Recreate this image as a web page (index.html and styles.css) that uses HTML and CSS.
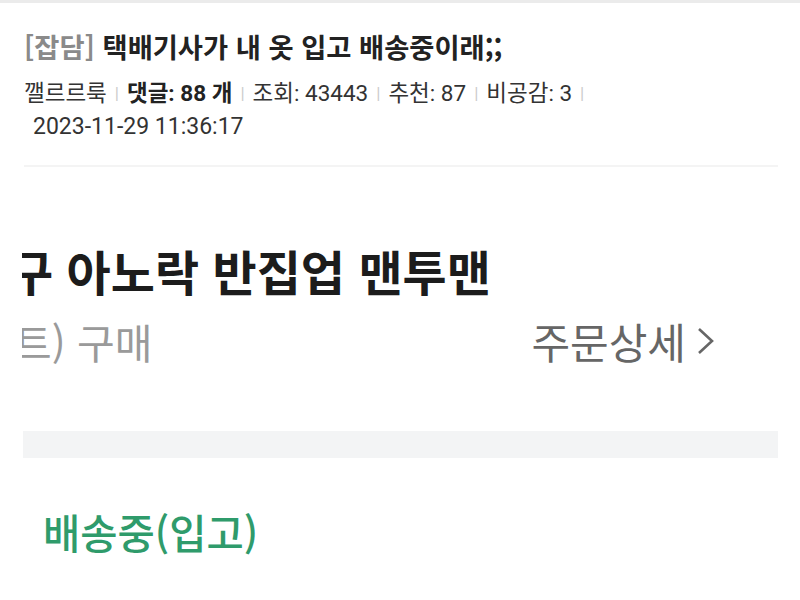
FILE: index.html
```html
<!DOCTYPE html>
<html lang="ko">
<head>
<meta charset="utf-8">
<link rel="stylesheet" href="styles.css">
</head>
<body>
<div class="topbar"></div>
<header class="post-head">
  <h1 class="title"><span class="cat">[잡담]</span> 택배기사가 내 옷 입고 배송중이래;;</h1>
  <div class="meta">
    <span>깰르르룩</span><span class="sep">|</span>
    <span class="strong">댓글: 88 개</span><span class="sep">|</span>
    <span>조회: 43443</span><span class="sep">|</span>
    <span>추천: 87</span><span class="sep">|</span>
    <span>비공감: 3</span><span class="sep">|</span>
  </div>
  <div class="date">2023-11-29 11:36:17</div>
</header>
<div class="divider"></div>
<section class="shot">
  <div class="product"><span class="clip1">구 아노락 반집업 맨투맨</span></div>
  <div class="row">
    <div class="sub"><span class="clip2">트) 구매</span></div>
    <div class="detail">주문상세<svg class="chev" width="20" height="30" viewBox="0 0 20 30"><path d="M3 3 L16 15 L3 27" fill="none" stroke="#666" stroke-width="2.6"/></svg></div>
  </div>
  <div class="graybar"></div>
  <div class="status">배송중(입고)</div>
</section>
</body>
</html>
```
FILE: styles.css
```css
html, body { margin: 0; padding: 0; background: #fff; }
body { font-family: "Roboto", "Noto Sans CJK KR", sans-serif; color: #222; }
.topbar { height: 3px; background: #ebebeb; }
.post-head { padding: 23px 0 0 24px; }
.title { margin: 0; font-family: "Noto Sans CJK KR", sans-serif; font-size: 27.3px; font-weight: 700; line-height: 40px; color: #222; }
.cat { color: #8a8a8a; }
.meta { margin-top: 12px; font-size: 22.5px; line-height: 30px; color: #333; display: flex; align-items: center; }
.meta .strong { font-weight: 700; color: #222; }
.sep { color: #ccc; font-size: 17px; margin: 0 8px; }
.date { margin-top: 4px; padding-left: 9px; font-size: 23px; line-height: 30px; color: #333; }
.divider { margin: 23px 22px 0 24px; height: 2px; background: #f4f4f4; }
.shot { padding: 73px 22px 0 22px; font-family: "Noto Sans CJK KR", sans-serif; }
.product { overflow: hidden; white-space: nowrap; font-size: 48px; font-weight: 700; line-height: 60px; color: #1c1c1c; }
.clip1 { display: inline-block; margin-left: -13px; }
.row { display: flex; justify-content: space-between; align-items: center; margin-top: 16px; }
.sub { overflow: hidden; white-space: nowrap; font-size: 41px; line-height: 50px; color: #9a9a9a; }
.clip2 { display: inline-block; margin-left: -8px; }
.detail { display: flex; align-items: center; gap: 10px; font-size: 42px; line-height: 50px; color: #666; margin-right: 62px; }
.chev { display: block; }
.graybar { margin: 65px 0 0 1px; height: 27px; background: #f3f4f5; }
.status { margin: 47px 0 0 21px; font-size: 40.5px; line-height: 54px; color: #2f9b6b; font-weight: 500; }
```
